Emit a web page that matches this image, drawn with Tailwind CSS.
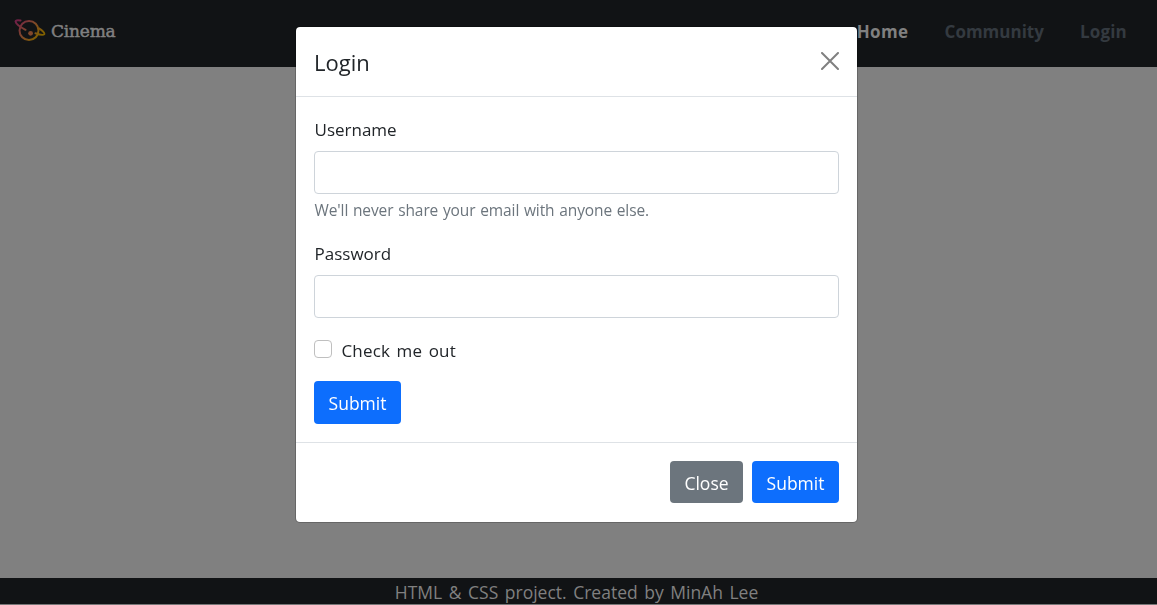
<!DOCTYPE html>
<html lang="en">
<head>
<meta charset="utf-8">
<title>Cinema</title>
<script src="https://cdn.jsdelivr.net/npm/@tailwindcss/browser@4"></script>
</head>
<body class="h-screen overflow-hidden bg-[#808080] font-['Open_Sans',sans-serif] text-[17px] text-[#212529]">
<div class="flex h-screen flex-col">
  <nav class="flex h-[67px] shrink-0 items-center justify-between bg-[#111315] pr-[30px] pb-[3px] pl-[14px]">
    <a class="flex items-center gap-[5px]">
      <svg class="mt-[-4px] h-[24px] w-[32px]" viewBox="0 0 32 24" fill="none" stroke="url(#g)" stroke-width="2" stroke-linecap="round">
        <defs><linearGradient id="g" gradientUnits="userSpaceOnUse" x1="4" y1="2" x2="24" y2="20"><stop offset="0" stop-color="#702046"/><stop offset=".5" stop-color="#80472b"/><stop offset="1" stop-color="#806000"/></linearGradient></defs>
        <circle cx="15" cy="12.500" r="9.500"/>
        <path d="M6.500 2.600C3 1.900 1.400 2.500 1.600 3.700C2 6.300 7 9.500 11.500 11.800M25 10.300C29 13 31 14.900 30.200 16.200C29.300 17.500 25 16.500 21.500 15.300"/>
        <circle cx="16.600" cy="15.300" r="2.400" fill="#80472b" stroke="none"/>
      </svg>
      <span class="font-['DejaVu_Serif',serif] text-[17px] tracking-[-0.2px] text-[#808080] [-webkit-text-stroke:0.5px_#808080]">Cinema</span>
    </a>
    <div class="flex gap-[36px] font-bold text-[#343a40]">
      <a class="tracking-[0.4px] text-[#808080]">Home</a><a>Community</a><a class="tracking-[0.2px]">Login</a>
    </div>
  </nav>
  <main class="flex-1"></main>
  <footer class="h-[27px] shrink-0 border-b border-[#777] bg-[#111315] pr-1 text-center text-[17.5px] leading-[29px] [word-spacing:2px] text-[#808080]">HTML &amp; CSS project. Created by MinAh Lee</footer>
</div>
<div class="fixed inset-0 flex items-start justify-center pt-[26px] pr-[4px]">
  <section class="flex h-[497px] w-[563px] flex-col rounded-[5px] border border-black/20 bg-white bg-clip-padding">
    <header class="flex h-[70px] shrink-0 items-center justify-between border-b border-[#dee2e6] px-[18px]">
      <h5 class="pt-px text-[22px]">Login</h5>
      <svg class="mt-[-2px] h-[18px] w-[18px]" viewBox="0 0 18 18" stroke="#808080" stroke-width="2" stroke-linecap="round"><path d="M1 1L17 17M17 1L1 17"/></svg>
    </header>
    <form class="flex flex-1 flex-col px-[18px] pt-[18px]">
      <label class="h-[36px] pl-[0.5px] leading-[30px]">Username</label>
      <input class="h-[43px] rounded-[4px] border border-[#ced4da]">
      <p class="mt-[4px] h-[24px] pl-[0.5px] text-[15.5px] leading-[24px] tracking-[-0.1px] text-[#6c757d] [word-spacing:0.8px]">We'll never share your email with anyone else.</p>
      <label class="mt-[17px] h-[36px] pl-[0.5px] leading-[30px]">Password</label>
      <input class="h-[43px] rounded-[4px] border border-[#ced4da]">
      <div class="mt-[17px] flex h-[28px] items-center gap-[9.5px]"><span class="mt-[-1px] h-[18px] w-[18px] rounded-[4px] border border-[#bfbfbf]"></span><span class="pt-[3px] tracking-[0.15px] [word-spacing:2px]">Check me out</span></div>
      <button type="button" class="mt-[18px] h-[43px] w-[87px] rounded-[4px] bg-[#0d6efd] pt-[2px] text-[17.5px] text-white">Submit</button>
    </form>
    <footer class="flex h-[80px] shrink-0 items-center justify-end gap-[9px] border-t border-[#dee2e6] px-[18px] pb-px">
      <button class="h-[42px] w-[73px] rounded-[4px] bg-[#6c757d] pt-[2px] text-[17.5px] text-white">Close</button>
      <button class="h-[42px] w-[87px] rounded-[4px] bg-[#0d6efd] pt-[2px] text-[17.5px] text-white">Submit</button>
    </footer>
  </section>
</div>
</body>
</html>
